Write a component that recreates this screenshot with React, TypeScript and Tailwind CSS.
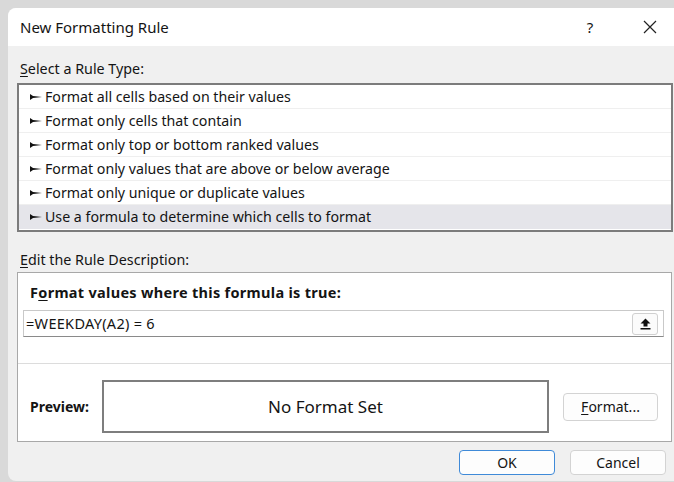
import React from 'react';

const ruleTypes = [
  'Format all cells based on their values',
  'Format only cells that contain',
  'Format only top or bottom ranked values',
  'Format only values that are above or below average',
  'Format only unique or duplicate values',
  'Use a formula to determine which cells to format',
];

const font = { fontFamily: '"Noto Sans", "Open Sans", sans-serif' };

function Pointer() {
  return (
    <svg width="12" height="8" viewBox="0 0 12 8" className="shrink-0">
      <polygon points="0,1 0,7 3,5 12,4 3,3" fill="#111" />
    </svg>
  );
}

function UploadIcon() {
  return (
    <svg width="11" height="12" viewBox="0 0 11 12">
      <polygon points="5.5,0.5 10.5,5.5 7.5,5.5 7.5,8.5 3.5,8.5 3.5,5.5 0.5,5.5" fill="#111" />
      <rect x="0.5" y="10" width="10" height="1.5" fill="#111" />
    </svg>
  );
}

export default function App() {
  return (
    <div className="w-[674px] h-[482px] overflow-hidden bg-[#d9d9d9] pt-2 pl-2 text-[#141414]" style={font}>
      <div className="w-[680px] h-[473px] bg-[#f0f0f0] rounded-l-[8px] overflow-hidden flex flex-col">
        {/* title bar */}
        <div className="h-[38px] bg-white flex items-center pl-3 shrink-0">
          <span className="text-[15px]">New Formatting Rule</span>
          <span className="ml-auto w-[20px] text-center text-[15px] mr-[43px]">?</span>
          <svg width="14" height="14" viewBox="0 0 14 14" className="mr-[31px]">
            <path d="M1 1 L13 13 M13 1 L1 13" stroke="#222" strokeWidth="1.2" />
          </svg>
        </div>

        <div className="pl-[9px] flex flex-col">
          <div className="mt-[15px] h-4 leading-4 pl-[3px] text-[14.3px]">
            <span className="underline underline-offset-2">S</span>elect a Rule Type:
          </div>

          {/* rule type list */}
          <div className="mt-[6px] w-[656px] h-[149px] border-2 border-[#7c7c7c] bg-white flex flex-col">
            {ruleTypes.map((r, i) => (
              <div
                key={r}
                className={`h-[24px] flex items-center gap-[3px] pl-[11px] text-[14.2px] ${
                  i < ruleTypes.length - 1 ? 'border-b border-[#efefef]' : 'bg-[#e5e5ea]'
                }`}
              >
                <Pointer />
                <span>{r}</span>
              </div>
            ))}
          </div>

          <div className="mt-[20px] h-4 leading-4 pl-[3px] text-[14.3px]">
            <span className="underline underline-offset-2">E</span>dit the Rule Description:
          </div>

          {/* rule description */}
          <div className="mt-[4px] w-[655px] h-[170px] border border-[#a8a8a8] bg-white flex flex-col">
            <div className="mt-[11px] pl-[12px] h-4 leading-4 text-[14.5px] font-bold tracking-[0.3px]">
              F<span className="underline underline-offset-2">o</span>rmat values where this formula is true:
            </div>
            <div className="mt-[10px] ml-[5px] w-[641px] h-[27px] border border-[#c9c9c9] border-b-[#8a8a8a] flex items-center pl-[2px] pr-[5px]">
              <span className="text-[14.5px] tracking-[0.3px]">=WEEKDAY(A2) = 6</span>
              <div className="ml-auto w-[26px] h-[22px] rounded-[3px] border border-[#d0d0d0] bg-[#fbfbfb] flex items-center justify-center">
                <UploadIcon />
              </div>
            </div>
            <div className="mt-[26px] h-px bg-[#dcdcdc]" />

            <div className="mt-[16px] flex items-center">
              <span className="pl-[12px] w-[84px] text-[14px] font-bold">Preview:</span>
              <div className="w-[447px] h-[53px] border-2 border-[#7e7e7e] flex items-center justify-center text-[17px]">
                No Format Set
              </div>
              <button className="ml-[14px] w-[95px] h-[28px] rounded-[4px] border border-[#d3d3d3] bg-[#fdfdfd] text-[14px]">
                <span className="underline underline-offset-2">F</span>ormat...
              </button>
            </div>
          </div>

          {/* dialog buttons */}
          <div className="mt-[8px] flex gap-[15px] pl-[442px]">
            <button className="w-[96px] h-[25px] rounded-[4px] border border-[#3f8ad8] bg-[#fdfdfd] text-[14px]">OK</button>
            <button className="w-[96px] h-[25px] rounded-[4px] border border-[#d3d3d3] bg-[#fdfdfd] text-[14px]">Cancel</button>
          </div>
        </div>
      </div>
    </div>
  );
}
